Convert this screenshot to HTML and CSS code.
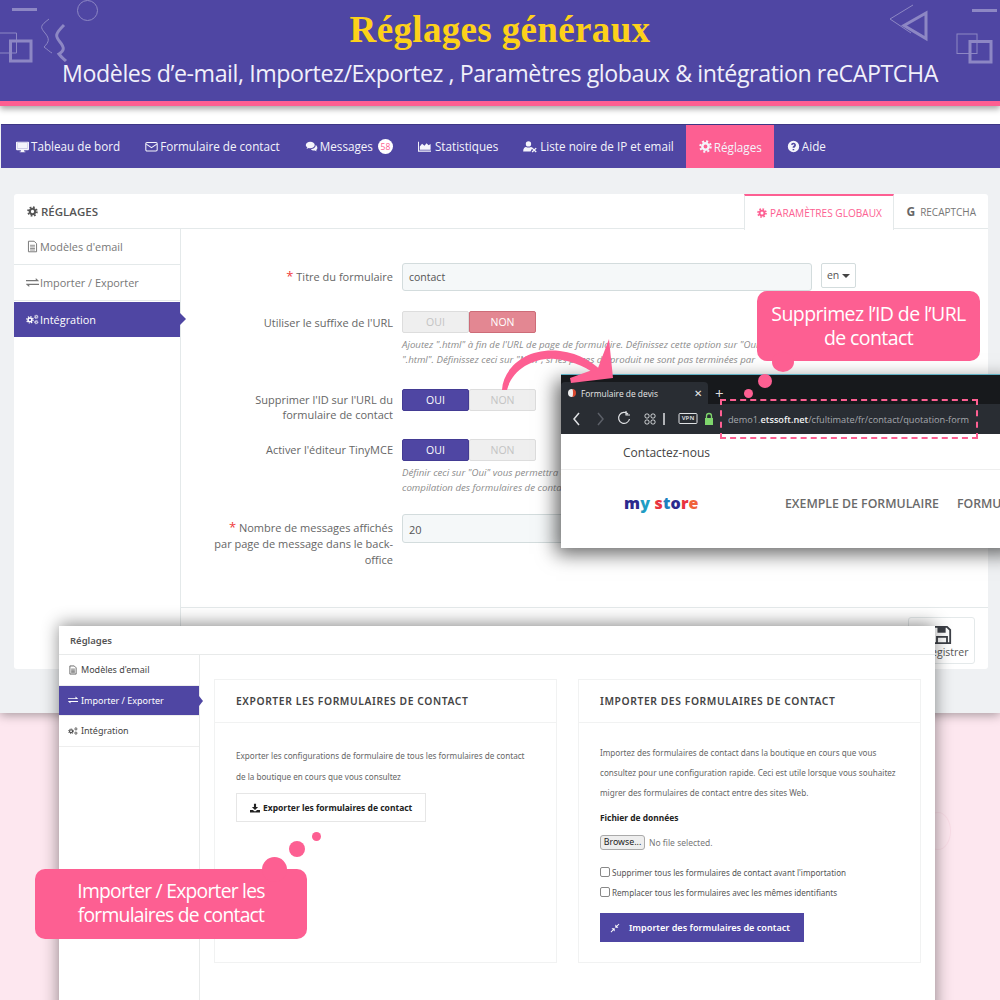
FILE: index.html
```html
<!DOCTYPE html>
<html lang="fr">
<head>
    <meta charset="UTF-8">
    <title>Réglages généraux</title>
    <link rel="stylesheet" href="styles.css">
</head>
<body>
    <svg class="sprite" width="0" height="0">
        <symbol id="i-gear" viewBox="0 0 16 16"><circle cx="8" cy="8" r="3.9" fill="none" stroke="currentColor" stroke-width="3"/><circle cx="8" cy="8" r="6.4" fill="none" stroke="currentColor" stroke-width="2.6" stroke-dasharray="2.5 2.53"/></symbol>
        <symbol id="i-desktop" viewBox="0 0 16 16"><path fill="currentColor" d="M1 2h14a1 1 0 0 1 1 1v8.500a1 1 0 0 1-1 1H10v1.500h1.500v1h-7v-1H6v-1.500H1a1 1 0 0 1-1-1V3a1 1 0 0 1 1-1zm.5 1.500V10h13V3.500z"/><path fill="currentColor" d="M1.500 3.500h13V10h-13z"/></symbol>
        <symbol id="i-mail" viewBox="0 0 16 16"><rect x="1" y="3" width="14" height="10.500" rx="1.500" fill="none" stroke="currentColor" stroke-width="1.300"/><path d="M1.500 5l6.500 4.500L14.500 5" fill="none" stroke="currentColor" stroke-width="1.300"/></symbol>
        <symbol id="i-comments" viewBox="0 0 16 16"><path fill="currentColor" d="M6.500 2C3.400 2 1 3.800 1 6c0 1.200.7 2.300 1.900 3-.2.700-.6 1.300-1.100 1.800 1 0 2-.4 2.800-1 .6.200 1.200.2 1.900.2 3.100 0 5.500-1.800 5.500-4S9.600 2 6.500 2z"/><path fill="currentColor" d="M13.200 6.200c.1 2.900-2.800 5-6 5.100.8 1.100 2.300 1.700 3.800 1.700.4 0 .8 0 1.200-.1.700.500 1.500.9 2.400 1-.4-.5-.7-1-.9-1.600 1-.6 1.500-1.500 1.500-2.600 0-1.400-.8-2.600-2-3.500z"/></symbol>
        <symbol id="i-chart" viewBox="0 0 16 16"><path fill="currentColor" d="M0 2h1.200v11H16v1.500H0z"/><path fill="currentColor" d="M2.200 12V8l2.800-3.500L8 7l2.500-3 2.500 2.500L15.500 5v7z"/></symbol>
        <symbol id="i-userx" viewBox="0 0 18 16"><circle cx="6.500" cy="4.800" r="3.300" fill="currentColor"/><path fill="currentColor" d="M0 14c0-3.500 1.500-5.500 3.500-5.500 1.800 1 4.200 1 6 0 .8 0 1.500.4 2 1L9 14z"/><path d="M11 10l5 4.800M16 10l-5 4.800" stroke="currentColor" stroke-width="1.700"/></symbol>
        <symbol id="i-help" viewBox="0 0 16 16"><path fill="currentColor" fill-rule="evenodd" d="M8 1a7 7 0 1 1 0 14A7 7 0 0 1 8 1zM6.900 11v1.700h2V11zM8 3.400c-1.700 0-2.800.9-3 2.400l1.800.4c.1-.8.500-1.100 1.100-1.100.7 0 1.100.3 1.100.8 0 .4-.2.700-.8 1.100-.9.600-1.300 1.100-1.300 2v.6h2V9.900c0-.4.200-.6.800-1C10.500 8.300 11 7.600 11 6.600c0-1.900-1.300-3.200-3-3.200z"/></symbol>
        <symbol id="i-file" viewBox="0 0 16 16"><path d="M3 1.500h7l3 3v10H3z" fill="none" stroke="currentColor" stroke-width="1.200"/><path d="M5 6.500h6M5 8.500h6M5 10.500h6M5 12.300h6" stroke="currentColor" stroke-width="1"/></symbol>
        <symbol id="i-swap" viewBox="0 0 16 16"><path fill="currentColor" d="M0 5h12V2.500L16 6l-.4.500H0zM16 9.500v1.500H4v2.500L0 10l.4-.5z"/></symbol>
        <symbol id="i-gears" viewBox="0 0 18 16"><use href="#i-gear" x="0" y="3" width="11" height="11"/><use href="#i-gear" x="11" y="1" width="6.500" height="6.500"/><use href="#i-gear" x="11" y="8.500" width="6.500" height="6.500"/></symbol>
        <symbol id="i-download" viewBox="0 0 16 16"><path fill="currentColor" d="M6.300 1h3.400v5.500H13L8 11.300 3 6.500h3.300zM0 11h4.500L8 13.500l3.500-2.500H16v4H0z"/></symbol>
        <symbol id="i-compress" viewBox="0 0 16 16"><path fill="currentColor" d="M14 1l1 1-3.500 3.500L13.500 7.500H8.500v-5l2 2zM2 15l-1-1 3.500-3.500-2-2h5v5l-2-2z"/></symbol>
        <symbol id="i-save" viewBox="0 0 22 22"><path d="M2 2h14.500L20 5.500V20H2z" fill="none" stroke="currentColor" stroke-width="2"/><path fill="currentColor" d="M6 2h9v6.500H6z"/><path d="M5.500 20v-7h11v7" fill="none" stroke="currentColor" stroke-width="2"/></symbol>
    </svg>

    <div class="poster">
        <!-- bandeau du haut -->
        <header class="banner">
            <h1>Réglages généraux</h1>
            <p>Modèles d’e-mail, Importez/Exportez , Paramètres globaux &amp; intégration reCAPTCHA</p>
            <svg class="decor" width="1000" height="101" viewBox="0 0 1000 101">
                <g fill="none" stroke="#8d87c4">
                    <path d="M12 9.500h25M972 10.500h25" stroke-width="3"/>
                    <circle cx="87.500" cy="10.500" r="10" stroke-width="1"/>
                    <path d="M0 33h16.500v20H0" stroke-width="1"/>
                    <rect x="10.500" y="41" width="20.500" height="20" stroke-width="3"/>
                    <path d="M49 19c-9 7-9 8-4 14s4 9-1 14c4 3 6 5 8 6" stroke-width="1"/>
                    <path d="M64 25c-9 9-9 11-4 17s4 9-1 12c3 4 5 5 7 7" stroke-width="3"/>
                    <path d="M913 5l-23 14 21 14" stroke-width="1"/>
                    <path d="M926 13l-22 12.500 22 13z" stroke-width="3"/>
                    <rect x="957" y="34" width="20" height="19.500" stroke-width="1"/>
                    <rect x="970" y="41.500" width="21" height="20.500" stroke-width="3"/>
                </g>
            </svg>
        </header>

        <!-- back-office, réglages globaux -->
        <section class="admin">
            <nav class="topnav">
                <a><svg class="ico"><use href="#i-desktop"/></svg>Tableau de bord</a>
                <a><svg class="ico"><use href="#i-mail"/></svg>Formulaire de contact</a>
                <a><svg class="ico"><use href="#i-comments"/></svg>Messages <span class="badge">58</span></a>
                <a><svg class="ico ico-chart"><use href="#i-chart"/></svg>Statistiques</a>
                <a><svg class="ico ico-wide"><use href="#i-userx"/></svg>Liste noire de IP et email</a>
                <a class="active"><svg class="ico"><use href="#i-gear"/></svg>Réglages</a>
                <a><svg class="ico"><use href="#i-help"/></svg>Aide</a>
            </nav>

            <div class="card">
                <div class="card-head">
                    <div class="card-title"><svg class="ico"><use href="#i-gear"/></svg>RÉGLAGES</div>
                    <div class="tabs">
                        <span class="tab current"><svg class="ico"><use href="#i-gear"/></svg>PARAMÈTRES GLOBAUX</span>
                        <span class="tab"><b class="g">G</b>RECAPTCHA</span>
                    </div>
                </div>
                <div class="card-body">
                    <ul class="side">
                        <li><svg class="ico"><use href="#i-file"/></svg>Modèles d'email</li>
                        <li><svg class="ico"><use href="#i-swap"/></svg>Importer / Exporter</li>
                        <li class="on"><svg class="ico"><use href="#i-gears"/></svg>Intégration</li>
                    </ul>
                    <div class="main">
                        <div class="form">
                            <div class="row row-title">
                                <label><i>*</i> Titre du formulaire</label>
                                <div class="field-line">
                                    <div class="input">contact</div>
                                    <div class="lang">en <span class="caret"></span></div>
                                </div>
                            </div>
                            <div class="row row-suffix">
                                <label>Utiliser le suffixe de l'URL</label>
                                <div>
                                    <div class="switch"><span>OUI</span><span class="no">NON</span></div>
                                    <p class="help">Ajoutez ".html" à fin de l'URL de page de formulaire. Définissez cette option sur "Oui" si<br>".html". Définissez ceci sur "Non", si les pages de produit ne sont pas terminées par</p>
                                </div>
                            </div>
                            <div class="row row-id">
                                <label>Supprimer l'ID sur l'URL du<br>formulaire de contact</label>
                                <div class="switch"><span class="yes">OUI</span><span>NON</span></div>
                            </div>
                            <div class="row row-tiny">
                                <label>Activer l'éditeur TinyMCE</label>
                                <div>
                                    <div class="switch"><span class="yes">OUI</span><span>NON</span></div>
                                    <p class="help">Définir ceci sur "Oui" vous permettra d'utiliser l'éditeur lors de la<br>compilation des formulaires de contact</p>
                                </div>
                            </div>
                            <div class="row row-count">
                                <label><i>*</i> Nombre de messages affichés<br>par page de message dans le back-<br>office</label>
                                <div class="input">20</div>
                            </div>
                        </div>
                        <div class="main-foot">
                            <button class="save"><svg class="save-ico"><use href="#i-save"/></svg>Enregistrer</button>
                        </div>
                    </div>
                </div>
            </div>
        </section>

        <div class="ghost-circle"></div>

        <!-- flèche vers la fenêtre du navigateur -->
        <svg class="arrow" width="120" height="60" viewBox="0 0 120 60">
            <path fill="#fd5f92" d="M2 51C3 30 25 8 60 12c20 2 35 13 45 23l-7 3C90 30 75 22 55 20 35 18 12 30 7 51z"/>
            <path fill="#fd5f92" d="M109 0l4 39-42 5-1-5 28-10z"/>
        </svg>

        <!-- fenêtre du navigateur -->
        <div class="browser">
            <div class="tabbar">
                <div class="btab">
                    <span class="favicon"></span>
                    <span class="btab-title">Formulaire de devis</span>
                    <span class="btab-x">✕</span>
                </div>
                <span class="btab-new">+</span>
            </div>
            <div class="toolbar">
                <svg class="tools" width="155" height="30" viewBox="0 0 155 30">
                    <g fill="none" stroke="#dfe1e4" stroke-width="1.500">
                        <path d="M18 9l-5 6 5 6"/>
                        <path d="M37 9l5 6-5 6" stroke="#5c6068"/>
                        <path d="M67 10a5.500 5.500 0 1 0 1.500 5M65 7v4h4" stroke-width="1.200"/>
                        <g stroke-width="1">
                            <rect x="84" y="10" width="4" height="4" rx="1.500"/><rect x="90" y="10" width="4" height="4" rx="1.500"/>
                            <rect x="84" y="16" width="4" height="4" rx="1.500"/><rect x="90" y="16" width="4" height="4" rx="1.500"/>
                        </g>
                        <path d="M103 9v12" />
                        <rect x="118" y="9.500" width="18" height="10" rx="1" stroke-width="1"/>
                    </g>
                    <path fill="#7fd66d" d="M144 14h8v7h-8z"/>
                    <path d="M145.500 14v-2a2.500 2.500 0 0 1 5 0v2" fill="none" stroke="#7fd66d" stroke-width="1.300"/>
                </svg>
                <span class="vpn">VPN</span>
                <span class="url">demo1.<b>etssoft.net</b>/cfultimate/fr/contact/quotation-form</span>
            </div>
            <div class="site-top">Contactez-nous</div>
            <div class="site-nav">
                <span class="logo"><b class="l1">m</b><b class="l2">y</b> <b class="l3">s</b><b class="l4">t</b><b class="l1">o</b><b class="l3">r</b><b class="l5">e</b></span>
                <span class="menu">EXEMPLE DE FORMULAIRE</span>
                <span class="menu">FORMULAIRE</span>
            </div>
        </div>
        <div class="dashed"></div>

        <div class="bubble bubble-url">Supprimez l’ID de l’URL<br>de contact</div>
        <span class="dot dot-a"></span>
        <span class="dot dot-b"></span>
        <span class="dot dot-c"></span>

        <!-- fenêtre import / export -->
        <section class="shot">
            <div class="shot-head">Réglages</div>
            <div class="shot-body">
                <ul class="shot-side">
                    <li><svg class="ico"><use href="#i-file"/></svg>Modèles d'email</li>
                    <li class="on"><svg class="ico"><use href="#i-swap"/></svg>Importer / Exporter</li>
                    <li><svg class="ico"><use href="#i-gears"/></svg>Intégration</li>
                </ul>
                <div class="panels">
                    <div class="panel">
                        <h2>EXPORTER LES FORMULAIRES DE CONTACT</h2>
                        <div class="panel-in export-in">
                            <p>Exporter les configurations de formulaire de tous les formulaires de contact<br>de la boutique en cours que vous consultez</p>
                            <a class="btn-export"><svg class="ico"><use href="#i-download"/></svg>Exporter les formulaires de contact</a>
                        </div>
                    </div>
                    <div class="panel">
                        <h2>IMPORTER DES FORMULAIRES DE CONTACT</h2>
                        <div class="panel-in">
                            <p>Importez des formulaires de contact dans la boutique en cours que vous<br>consultez pour une configuration rapide. Ceci est utile lorsque vous souhaitez<br>migrer des formulaires de contact entre des sites Web.</p>
                            <div class="file-label">Fichier de données</div>
                            <div class="file-line"><span class="browse">Browse...</span><span>No file selected.</span></div>
                            <div class="check"><span class="box"></span>Supprimer tous les formulaires de contact avant l'importation</div>
                            <div class="check"><span class="box"></span>Remplacer tous les formulaires avec les mêmes identifiants</div>
                            <a class="btn-import"><svg class="ico"><use href="#i-compress"/></svg>Importer des formulaires de contact</a>
                        </div>
                    </div>
                </div>
            </div>
        </section>

        <div class="bubble bubble-import">Importer / Exporter les<br>formulaires de contact</div>
        <span class="dot dot-d"></span>
        <span class="dot dot-e"></span>
        <span class="dot dot-f"></span>
    </div>
</body>
</html>
```

FILE: styles.css
```css
:root {
    --purple: #4f46a3;
    --pink: #fd5f92;
    --text: #6c6c6c;
    --line: #e4e9ea;
}

* {
    box-sizing: border-box;
    margin: 0;
    padding: 0;
}

body {
    font-family: 'Open Sans', 'Liberation Sans', sans-serif;
    background: #fff;
}

ul {
    list-style: none;
}

.sprite {
    position: absolute;
}

.ico {
    width: 13px;
    height: 13px;
    flex: none;
}

.poster {
    position: relative;
    width: 1000px;
    height: 1000px;
    overflow: hidden;
    background: #fde7ef;
}

/* bandeau */
.banner {
    position: absolute;
    top: 0;
    left: 0;
    width: 100%;
    height: 106px;
    background: var(--purple);
    border-bottom: 5px solid var(--pink);
    box-shadow: 0 3px 6px rgba(0, 0, 0, 0.35);
    text-align: center;
    z-index: 2;
}

.banner h1 {
    font-family: 'Liberation Serif', serif;
    font-size: 37px;
    font-weight: 700;
    line-height: 42px;
    letter-spacing: 0.35px;
    padding-top: 9px;
    color: #fdd11a;
}

.banner p {
    font-size: 23.2px;
    line-height: 30px;
    letter-spacing: -0.42px;
    margin-top: 7px;
    color: #f1f0fa;
}

.decor {
    position: absolute;
    top: 0;
    left: 0;
}

/* back-office */
.admin {
    position: absolute;
    top: 106px;
    left: 0;
    width: 100%;
    height: 607px;
    padding: 18px 0 0 1px;
    background: linear-gradient(#fff 18px, #eff1f3 18px);
    box-shadow: 0 2px 10px rgba(0, 0, 0, 0.35);
}

.topnav {
    display: flex;
    height: 44px;
    padding: 0 0 1px 2.500px;
    background: var(--purple);
    border-top: 1px solid #3e3785;
}

.topnav a {
    display: flex;
    align-items: center;
    gap: 2px;
    padding: 0 12.500px;
    font-size: 11.700px;
    color: #f4f4fb;
}

.topnav a.active {
    background: var(--pink);
    margin-bottom: -1px;
}

.topnav .ico-wide {
    width: 15px;
}

.topnav .ico-chart {
    margin-right: 2px;
}

.badge {
    display: inline-block;
    width: 15px;
    height: 15px;
    margin-left: 3px;
    border-radius: 50%;
    background: #fff;
    color: var(--pink);
    font-size: 8.500px;
    line-height: 15px;
    text-align: center;
}

.card {
    position: absolute;
    top: 88px;
    left: 14px;
    width: 974px;
    height: 475px;
    background: #fff;
    border-radius: 3px;
}

.card-head {
    display: flex;
    justify-content: space-between;
    height: 35px;
    border-bottom: 1px solid var(--line);
}

.card-title {
    display: flex;
    align-items: center;
    gap: 3px;
    padding-left: 13px;
    font-size: 11.500px;
    font-weight: 600;
    color: #555;
}

.card-title .ico {
    width: 11px;
    height: 11px;
}

.tabs {
    display: flex;
}

.tab {
    display: flex;
    align-items: center;
    gap: 5px;
    padding: 1px 12px 0;
    font-size: 10px;
    color: #777;
}

.tab.current {
    width: 150px;
    justify-content: center;
    gap: 3px;
    padding: 0;
    height: 36px;
    background: #fff;
    font-size: 10.100px;
    color: var(--pink);
    border-top: 2px solid var(--pink);
    border-left: 1px solid var(--line);
    border-right: 1px solid var(--line);
}

.tab .ico {
    width: 10px;
    height: 10px;
}

.g {
    font-size: 12px;
    font-weight: 700;
    color: #666;
}

.card-body {
    display: flex;
    height: 440px;
}

.side {
    width: 167px;
    flex: none;
    border-right: 1px solid var(--line);
}

.side li {
    position: relative;
    display: flex;
    align-items: center;
    gap: 1px;
    height: 36px;
    padding-left: 12px;
    font-size: 10.900px;
    color: #777;
    border-bottom: 1px solid var(--line);
}

.side li.on {
    height: 35px;
    margin-top: 1px;
    background: var(--purple);
    color: #fff;
    border-bottom: 0;
}

.side li.on::after {
    content: "";
    position: absolute;
    right: -6px;
    top: 11px;
    border-left: 6px solid var(--purple);
    border-top: 6px solid transparent;
    border-bottom: 6px solid transparent;
}

.main {
    flex: 1;
    display: flex;
    flex-direction: column;
}

.form {
    height: 379px;
    border-bottom: 1px solid var(--line);
}

.row {
    display: grid;
    grid-template-columns: 198px 1fr;
    column-gap: 9px;
    padding-left: 14px;
}

.row label {
    text-align: right;
    font-size: 11px;
    line-height: 15px;
    color: #666;
}

.row label i {
    font-style: normal;
    color: #f03a3a;
    font-size: 13px;
}

.row-title {
    padding-top: 34px;
}

.row-title label {
    padding-top: 6px;
}

.field-line {
    display: flex;
    gap: 9px;
}

.input {
    width: 410px;
    height: 28px;
    padding-left: 6px;
    background: #f5f8f9;
    border: 1px solid #d3dcdd;
    border-radius: 3px;
    font-size: 10.500px;
    line-height: 27px;
    color: #555;
}

.lang {
    width: 35px;
    height: 25px;
    background: #fff;
    border: 1px solid #d3dcdd;
    border-radius: 2px;
    font-size: 10.500px;
    line-height: 23px;
    text-align: center;
    color: #555;
}

.caret {
    display: inline-block;
    vertical-align: middle;
    border-top: 4px solid #444;
    border-left: 4px solid transparent;
    border-right: 4px solid transparent;
}

.row-suffix {
    padding-top: 20px;
}

.row-suffix label {
    padding-top: 4px;
}

.switch {
    display: flex;
    width: 134px;
    height: 22px;
}

.switch span {
    flex: 1;
    background: #efefef;
    border: 1px solid #ddd;
    border-radius: 2px;
    font-size: 10.500px;
    line-height: 20px;
    text-align: center;
    color: #c3c3c3;
}

.switch .no {
    background: #e38792;
    border-color: #cd6c78;
    color: #fff;
}

.switch .yes {
    background: var(--purple);
    border-color: #433b93;
    color: #fff;
}

.help {
    margin-top: 4px;
    font-size: 9.700px;
    line-height: 15px;
    font-style: italic;
    white-space: nowrap;
    color: #8c8c8c;
}

.row-id {
    padding-top: 22px;
}

.row-id label {
    padding-top: 3px;
}

.row-tiny {
    padding-top: 17px;
}

.row-tiny label {
    padding-top: 3px;
}

.row-count {
    padding-top: 19px;
}

.row-count label {
    padding-top: 5px;
    line-height: 16px;
}

.row-count .input {
    height: 29px;
    line-height: 29px;
    font-size: 11px;
}

.main-foot {
    display: flex;
    justify-content: flex-end;
    padding: 9px 13px 0 0;
}

.save {
    display: flex;
    flex-direction: column;
    align-items: center;
    width: 67px;
    height: 47px;
    padding-top: 7px;
    background: #fff;
    border: 1px solid var(--line);
    border-radius: 3px;
    font-family: inherit;
    font-size: 10.500px;
    color: #555;
}

.save-ico {
    width: 20px;
    height: 20px;
    color: #3d4047;
}

/* fenêtre du navigateur */
.arrow {
    position: absolute;
    left: 500px;
    top: 339px;
    z-index: 4;
}

.browser {
    position: absolute;
    left: 561px;
    top: 374px;
    width: 460px;
    height: 174px;
    background: #fff;
    border-top: 1px solid #5fb0c4;
    box-shadow: -5px 6px 18px rgba(0, 0, 0, 0.6);
    z-index: 3;
}

.tabbar {
    display: flex;
    align-items: flex-end;
    height: 29px;
    background: #17191c;
}

.btab {
    display: flex;
    align-items: center;
    width: 147px;
    height: 22px;
    padding-left: 7px;
    background: #292d33;
    border-radius: 4px 4px 0 0;
    font-size: 8.400px;
    color: #e8e8e8;
}

.favicon {
    width: 8px;
    height: 8px;
    border-radius: 50%;
    background: #eee;
    border-right: 3px solid #d9482f;
}

.btab-title {
    margin-left: 5px;
    flex: 1;
}

.btab-x {
    margin-right: 6px;
    font-size: 10px;
}

.btab-new {
    margin: 0 0 1px 7px;
    font-size: 15px;
    line-height: 20px;
    color: #ddd;
}

.toolbar {
    position: relative;
    display: flex;
    align-items: center;
    height: 30px;
    background: #292d33;
}

.tools {
    flex: none;
}

.vpn {
    position: absolute;
    left: 118px;
    top: 10px;
    width: 18px;
    font-size: 6px;
    line-height: 9px;
    font-weight: 700;
    text-align: center;
    color: #cfd2d6;
}

.url {
    margin-left: 12px;
    font-size: 9.200px;
    white-space: nowrap;
    color: #a6a9ae;
}

.url b {
    font-weight: 600;
    color: #f1f1f1;
}

.site-top {
    height: 36px;
    padding: 10px 0 0 62px;
    font-size: 12px;
    line-height: 17px;
    color: #444;
    border-bottom: 1px solid #eee;
}

.site-nav {
    display: flex;
    align-items: center;
    height: 66px;
    padding-left: 63px;
    font-size: 12.300px;
    font-weight: 600;
    color: #6a6a6a;
}

.logo {
    flex: none;
    width: 161px;
    font-family: 'Noto Sans', sans-serif;
    font-size: 16px;
    letter-spacing: 0.200px;
}

.l1 { color: #2b2a8e; }
.l2 { color: #1f9dc4; }
.l3 { color: #e8333f; }
.l4 { color: #1c7fbf; }
.l5 { color: #f0623a; }

.menu {
    margin-right: 18px;
    white-space: nowrap;
}

.dashed {
    position: absolute;
    left: 720px;
    top: 399px;
    width: 258px;
    height: 40px;
    border: 2px dashed var(--pink);
    z-index: 4;
}

/* bulles */
.bubble {
    position: absolute;
    background: var(--pink);
    border-radius: 10px;
    color: #fff;
    text-align: center;
    z-index: 6;
}

.bubble-url {
    left: 757px;
    top: 291px;
    width: 223px;
    height: 70px;
    padding-top: 11px;
    font-size: 19.500px;
    line-height: 24px;
    letter-spacing: -0.6px;
}

.bubble-import {
    left: 35px;
    top: 869px;
    width: 272px;
    height: 70px;
    padding-top: 10px;
    font-size: 19.300px;
    line-height: 24px;
    letter-spacing: -0.75px;
}

.dot {
    position: absolute;
    border-radius: 50%;
    background: var(--pink);
    z-index: 6;
}

.dot-a { left: 772px; top: 352px; width: 22px; height: 20px; }
.dot-b { left: 758px; top: 374px; width: 14px; height: 14px; }
.dot-c { left: 744px; top: 389px; width: 9px; height: 9px; }
.dot-d { left: 262px; top: 857px; width: 25px; height: 25px; }
.dot-e { left: 289px; top: 841px; width: 16px; height: 16px; }
.dot-f { left: 312px; top: 832px; width: 9px; height: 9px; }

.ghost-circle {
    position: absolute;
    left: 925px;
    top: 812px;
    width: 26px;
    height: 38px;
    border: 1px solid #fadde7;
    border-radius: 50%;
}

/* fenêtre import / export */
.shot {
    position: absolute;
    left: 59px;
    top: 626px;
    width: 876px;
    height: 400px;
    background: #fff;
    box-shadow: 0 -2px 16px rgba(0, 0, 0, 0.45);
    z-index: 5;
    font-family: 'Noto Sans', 'Liberation Sans', sans-serif;
}

.shot-head {
    height: 29px;
    padding: 8px 0 0 11px;
    font-size: 9.500px;
    font-weight: 600;
    line-height: 13px;
    color: #555;
    border-bottom: 1px solid #e8eaea;
}

.shot-body {
    display: flex;
}

.shot-side {
    width: 141px;
    height: 371px;
    flex: none;
    border-right: 1px solid #e8eaea;
}

.shot-side li {
    position: relative;
    display: flex;
    align-items: center;
    gap: 3px;
    height: 30.500px;
    padding-left: 9px;
    font-size: 9px;
    color: #444;
    border-bottom: 1px solid #eee;
}

.shot-side .ico {
    width: 10px;
    height: 10px;
}

.shot-side li.on {
    background: var(--purple);
    color: #fff;
}

.shot-side li.on::after {
    content: "";
    position: absolute;
    right: -4px;
    top: 10px;
    border-left: 4px solid var(--purple);
    border-top: 5px solid transparent;
    border-bottom: 5px solid transparent;
}

.panels {
    display: flex;
    gap: 21px;
    padding: 24px 0 0 14px;
}

.panel {
    width: 343px;
    height: 284px;
    border: 1px solid #f1f2f2;
}

.panel h2 {
    height: 43px;
    padding-left: 21px;
    font-size: 10.300px;
    font-weight: 600;
    line-height: 42px;
    letter-spacing: 0.600px;
    color: #444;
    border-bottom: 1px solid #f1f2f2;
}

.panel-in {
    padding: 20px 0 0 21px;
}

.panel-in p {
    font-size: 8.130px;
    line-height: 20px;
    white-space: nowrap;
    color: #666;
}

.export-in {
    padding-top: 22px;
}

.export-in p {
    line-height: 21px;
}

.btn-export {
    display: flex;
    align-items: center;
    gap: 3px;
    width: 190px;
    height: 29px;
    margin-top: 6px;
    padding-left: 13px;
    border: 1px solid #e6e6e6;
    font-size: 8.500px;
    font-weight: 700;
    color: #222;
}

.btn-export .ico {
    width: 10px;
    height: 10px;
}

.file-label {
    margin-top: 9px;
    font-size: 8.400px;
    font-weight: 700;
    line-height: 12px;
    color: #222;
}

.file-line {
    display: flex;
    align-items: center;
    gap: 4px;
    margin-top: 11px;
    font-size: 8.500px;
    color: #777;
}

.browse {
    width: 45px;
    height: 15px;
    background: #eee;
    border: 1px solid #aaa;
    border-radius: 3px;
    font-size: 8.800px;
    line-height: 13px;
    text-align: center;
    color: #222;
}

.check {
    display: flex;
    align-items: center;
    gap: 2px;
    height: 20px;
    font-size: 8.100px;
    color: #555;
}

.file-line + .check {
    margin-top: 12px;
}

.box {
    width: 10px;
    height: 10px;
    background: #fff;
    border: 1px solid #888;
    border-radius: 2px;
}

.btn-import {
    display: flex;
    align-items: center;
    gap: 9px;
    width: 204px;
    height: 29px;
    margin-top: 11px;
    padding-left: 10px;
    background: var(--purple);
    font-size: 9.100px;
    font-weight: 600;
    color: #fff;
}

.btn-import .ico {
    width: 10px;
    height: 10px;
}
```
